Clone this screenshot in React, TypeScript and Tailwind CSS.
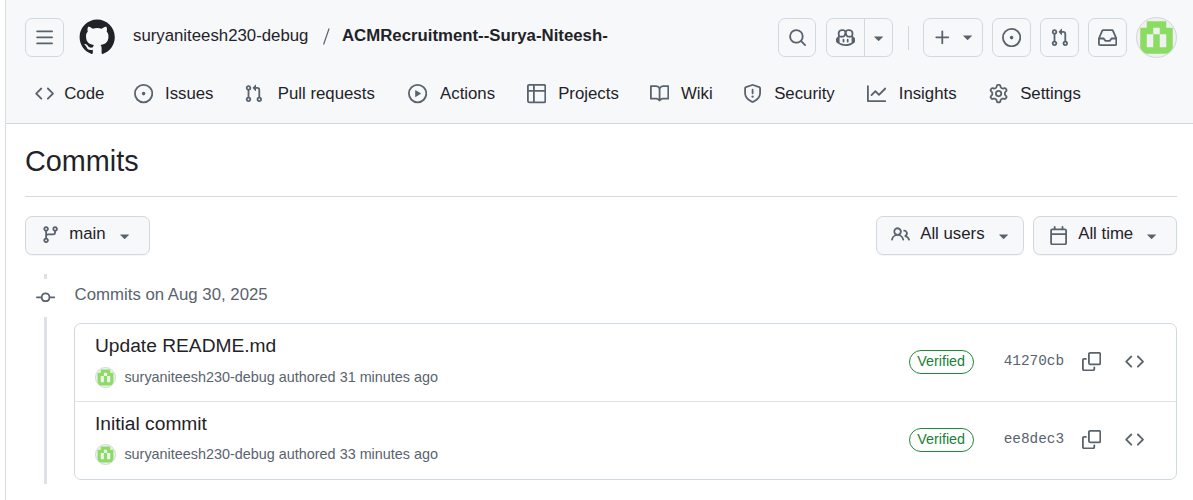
import type { ReactNode } from "react";

const paths = {
  bars: "M1 2.75A.75.75 0 0 1 1.75 2h12.5a.75.75 0 0 1 0 1.5H1.75A.75.75 0 0 1 1 2.75Zm0 5A.75.75 0 0 1 1.75 7h12.5a.75.75 0 0 1 0 1.5H1.75A.75.75 0 0 1 1 7.75ZM1.75 12h12.5a.75.75 0 0 1 0 1.5H1.75a.75.75 0 0 1 0-1.5Z",
  code: "m11.28 3.22 4.25 4.25a.75.75 0 0 1 0 1.06l-4.25 4.25a.749.749 0 0 1-1.275-.326.749.749 0 0 1 .215-.734L13.94 8l-3.72-3.72a.749.749 0 0 1 .326-1.275.749.749 0 0 1 .734.215Zm-6.56 0a.751.751 0 0 1 1.042.018.751.751 0 0 1 .018 1.042L2.06 8l3.72 3.72a.749.749 0 0 1-.326 1.275.749.749 0 0 1-.734-.215L.47 8.53a.75.75 0 0 1 0-1.06Z",
  issue: "M8 9.5a1.5 1.5 0 1 0 0-3 1.5 1.5 0 0 0 0 3ZM8 0a8 8 0 1 1 0 16A8 8 0 0 1 8 0ZM1.5 8a6.5 6.5 0 1 0 13 0 6.5 6.5 0 0 0-13 0Z",
  pull: "M1.5 3.25a2.25 2.25 0 1 1 3 2.122v5.256a2.251 2.251 0 1 1-1.5 0V5.372A2.25 2.25 0 0 1 1.5 3.25Zm5.677-.177L9.573.677A.25.25 0 0 1 10 .854V2.5h1A2.5 2.5 0 0 1 13.5 5v5.628a2.251 2.251 0 1 1-1.5 0V5a1 1 0 0 0-1-1h-1v1.646a.25.25 0 0 1-.427.177L7.177 3.427a.25.25 0 0 1 0-.354ZM3.75 2.5a.75.75 0 1 0 0 1.5.75.75 0 0 0 0-1.5Zm0 9.5a.75.75 0 1 0 0 1.5.75.75 0 0 0 0-1.5Zm8.25.75a.75.75 0 1 0 1.5 0 .75.75 0 0 0-1.5 0Z",
  play: "M8 0a8 8 0 1 1 0 16A8 8 0 0 1 8 0ZM1.5 8a6.5 6.5 0 1 0 13 0 6.5 6.5 0 0 0-13 0Zm4.879-2.773 4.264 2.559a.25.25 0 0 1 0 .428l-4.264 2.559A.25.25 0 0 1 6 10.559V5.442a.25.25 0 0 1 .379-.215Z",
  table: "M0 1.75C0 .784.784 0 1.75 0h12.5C15.216 0 16 .784 16 1.75v12.5A1.75 1.75 0 0 1 14.25 16H1.75A1.75 1.75 0 0 1 0 14.25ZM6.5 6.5v8h7.75a.25.25 0 0 0 .25-.25V6.5Zm8-1.5V1.75a.25.25 0 0 0-.25-.25H6.5V5Zm-13 1.5v7.75c0 .138.112.25.25.25H5v-8ZM5 5V1.5H1.75a.25.25 0 0 0-.25.25V5Z",
  book: "M0 1.75A.75.75 0 0 1 .75 1h4.253c1.227 0 2.317.59 3 1.501A3.743 3.743 0 0 1 11.006 1h4.245a.75.75 0 0 1 .75.75v10.5a.75.75 0 0 1-.75.75h-4.507a2.25 2.25 0 0 0-1.591.659l-.622.621a.75.75 0 0 1-1.06 0l-.622-.621A2.25 2.25 0 0 0 5.258 13H.75a.75.75 0 0 1-.75-.75Zm7.251 10.324.004-5.073-.002-2.253A2.25 2.25 0 0 0 5.003 2.5H1.5v9h3.757a3.75 3.75 0 0 1 1.994.574ZM8.755 4.75l-.004 7.322a3.752 3.752 0 0 1 1.992-.572H14.5v-9h-3.495a2.25 2.25 0 0 0-2.25 2.25Z",
  shield: "M7.467.133a1.748 1.748 0 0 1 1.066 0l5.25 1.68A1.75 1.75 0 0 1 15 3.48V7c0 1.566-.32 3.182-1.303 4.682-.983 1.498-2.585 2.813-5.032 3.855a1.697 1.697 0 0 1-1.33 0c-2.447-1.042-4.049-2.357-5.032-3.855C1.32 10.182 1 8.566 1 7V3.48a1.75 1.75 0 0 1 1.217-1.667Zm.61 1.429a.25.25 0 0 0-.153 0l-5.25 1.68a.25.25 0 0 0-.174.238V7c0 1.358.275 2.666 1.057 3.86.784 1.194 2.121 2.34 4.366 3.297a.196.196 0 0 0 .154 0c2.245-.956 3.582-2.104 4.366-3.298C13.225 9.666 13.5 8.36 13.5 7V3.48a.251.251 0 0 0-.174-.237l-5.25-1.68ZM8.75 4.75v3a.75.75 0 0 1-1.5 0v-3a.75.75 0 0 1 1.5 0ZM9 10.5a1 1 0 1 1-2 0 1 1 0 0 1 2 0Z",
  graph: "M1.5 1.75V13.5h13.75a.75.75 0 0 1 0 1.5H.75a.75.75 0 0 1-.75-.75V1.75a.75.75 0 0 1 1.5 0Zm14.28 2.53-5.25 5.25a.75.75 0 0 1-1.06 0L7 7.06 4.28 9.78a.751.751 0 0 1-1.042-.018.751.751 0 0 1-.018-1.042l3.25-3.25a.75.75 0 0 1 1.06 0L10 7.94l4.72-4.72a.751.751 0 0 1 1.042.018.751.751 0 0 1 .018 1.042Z",
  gear: "M8 0a8.2 8.2 0 0 1 .701.031C9.444.095 9.99.645 10.16 1.29l.288 1.107c.018.066.079.158.212.224.231.114.454.243.668.386.123.082.233.09.299.071l1.103-.303c.644-.176 1.392.021 1.82.63.27.385.506.792.704 1.218.315.675.111 1.422-.364 1.891l-.814.806c-.049.048-.098.147-.088.294.016.257.016.515 0 .772-.01.147.038.246.088.294l.814.806c.475.469.679 1.216.364 1.891a7.977 7.977 0 0 1-.704 1.217c-.428.61-1.176.807-1.82.63l-1.102-.302c-.067-.019-.177-.011-.3.071a5.909 5.909 0 0 1-.668.386c-.133.066-.194.158-.211.224l-.29 1.106c-.168.646-.715 1.196-1.458 1.26a8.006 8.006 0 0 1-1.402 0c-.743-.064-1.289-.614-1.458-1.26l-.289-1.106c-.018-.066-.079-.158-.212-.224a5.738 5.738 0 0 1-.668-.386c-.123-.082-.233-.09-.299-.071l-1.103.303c-.644.176-1.392-.021-1.82-.63a8.12 8.12 0 0 1-.704-1.218c-.315-.675-.111-1.422.363-1.891l.815-.806c.05-.048.098-.147.088-.294a6.214 6.214 0 0 1 0-.772c.01-.147-.038-.246-.088-.294l-.815-.806C.635 6.045.431 5.298.746 4.623a7.92 7.92 0 0 1 .704-1.217c.428-.61 1.176-.807 1.82-.63l1.102.302c.067.019.177.011.3-.071.214-.143.437-.272.668-.386.133-.066.194-.158.211-.224l.29-1.106C6.009.645 6.556.095 7.299.03 7.53.01 7.764 0 8 0Zm-.571 1.525c-.036.003-.108.036-.137.146l-.289 1.105c-.147.561-.549.967-.998 1.189-.173.086-.34.183-.5.29-.417.278-.97.423-1.529.27l-1.103-.303c-.109-.03-.175.016-.195.045-.22.312-.412.644-.573.99-.014.031-.021.11.059.19l.815.806c.411.406.562.957.53 1.456a4.709 4.709 0 0 0 0 .582c.032.499-.119 1.05-.53 1.456l-.815.806c-.081.08-.073.159-.059.19.162.346.353.677.573.989.02.03.085.076.195.046l1.102-.303c.56-.153 1.113-.008 1.53.27.161.107.328.204.501.29.447.222.85.629.997 1.189l.289 1.105c.029.109.101.143.137.146a6.6 6.6 0 0 0 1.142 0c.036-.003.108-.036.137-.146l.289-1.105c.147-.561.549-.967.998-1.189.173-.086.34-.183.5-.29.417-.278.97-.423 1.529-.27l1.103.303c.109.029.175-.016.195-.045.22-.313.411-.644.573-.99.014-.031.021-.11-.059-.19l-.815-.806c-.411-.406-.562-.957-.53-1.456a4.709 4.709 0 0 0 0-.582c-.032-.499.119-1.05.53-1.456l.815-.806c.081-.08.073-.159.059-.19a6.464 6.464 0 0 0-.573-.989c-.02-.03-.085-.076-.195-.046l-1.102.303c-.56.153-1.113.008-1.53-.27a4.44 4.44 0 0 0-.501-.29c-.447-.222-.85-.629-.997-1.189l-.289-1.105c-.029-.11-.101-.143-.137-.146a6.6 6.6 0 0 0-1.142 0ZM11 8a3 3 0 1 1-6 0 3 3 0 0 1 6 0ZM9.5 8a1.5 1.5 0 1 0-3.001.001A1.5 1.5 0 0 0 9.5 8Z",
  search: "M10.68 11.74a6 6 0 0 1-7.922-8.982 6 6 0 0 1 8.982 7.922l3.04 3.04a.749.749 0 0 1-.326 1.275.749.749 0 0 1-.734-.215ZM11.5 7a4.499 4.499 0 1 0-8.997 0A4.499 4.499 0 0 0 11.5 7Z",
  copilot: "M7.998 15.035c-4.562 0-7.873-2.914-7.998-3.749V9.338c.085-.628.677-1.686 1.588-2.065.013-.07.024-.143.036-.218.029-.183.06-.384.126-.612-.201-.508-.254-1.084-.254-1.656 0-.87.128-1.769.693-2.484.579-.733 1.494-1.124 2.724-1.261 1.206-.134 2.262.034 2.944.765.05.053.096.108.139.165.044-.057.094-.112.143-.165.682-.731 1.738-.899 2.944-.765 1.23.137 2.145.528 2.724 1.261.566.715.693 1.614.693 2.484 0 .572-.053 1.148-.254 1.656.066.228.098.429.126.612.012.076.024.148.037.218.924.385 1.522 1.471 1.591 2.095v1.872c0 .766-3.351 3.795-8.002 3.795Zm0-1.485c2.28 0 4.584-1.11 5.002-1.433V7.862l-.023-.116c-.49.21-1.075.291-1.727.291-1.146 0-2.059-.327-2.71-.991A3.222 3.222 0 0 1 8 6.303a3.24 3.24 0 0 1-.544.743c-.65.664-1.563.991-2.71.991-.652 0-1.236-.081-1.727-.291l-.023.116v4.255c.419.323 2.722 1.433 5.002 1.433ZM6.762 2.83c-.193-.206-.637-.413-1.682-.297-1.019.113-1.479.404-1.713.7-.247.312-.369.789-.369 1.554 0 .793.129 1.171.308 1.371.162.181.519.379 1.442.379.853 0 1.339-.235 1.638-.54.315-.322.527-.827.617-1.553.117-.935-.037-1.395-.241-1.614Zm4.155-.297c-1.044-.116-1.488.091-1.681.297-.204.219-.359.679-.242 1.614.091.726.303 1.231.618 1.553.299.305.784.54 1.638.54.922 0 1.28-.198 1.442-.379.179-.2.308-.578.308-1.371 0-.765-.123-1.242-.37-1.554-.233-.296-.693-.587-1.713-.7ZM6.25 9.037a.75.75 0 0 1 .75.75v1.501a.75.75 0 0 1-1.5 0V9.787a.75.75 0 0 1 .75-.75Zm4.25.75v1.501a.75.75 0 0 1-1.5 0V9.787a.75.75 0 0 1 1.5 0Z",
  caret: "m4.427 7.427 3.396 3.396a.25.25 0 0 0 .354 0l3.396-3.396A.25.25 0 0 0 11.396 7H4.604a.25.25 0 0 0-.177.427Z",
  plus: "M7.75 2a.75.75 0 0 1 .75.75V7h4.25a.75.75 0 0 1 0 1.5H8.5v4.25a.75.75 0 0 1-1.5 0V8.5H2.75a.75.75 0 0 1 0-1.5H7V2.75A.75.75 0 0 1 7.75 2Z",
  inbox: "M2.8 2.06A1.75 1.75 0 0 1 4.41 1h7.18c.7 0 1.333.417 1.61 1.06l2.74 6.395c.04.093.06.194.06.295v4.5A1.75 1.75 0 0 1 14.25 15H1.75A1.75 1.75 0 0 1 0 13.25v-4.5c0-.101.02-.202.06-.295Zm1.61.44a.25.25 0 0 0-.23.152L1.887 8H4.75a.75.75 0 0 1 .6.3L6.625 10h2.75l1.275-1.7a.75.75 0 0 1 .6-.3h2.863L11.82 2.652a.25.25 0 0 0-.23-.152Zm10.09 7h-2.875l-1.275 1.7a.75.75 0 0 1-.6.3h-3.5a.75.75 0 0 1-.6-.3L4.375 9.5H1.5v3.75c0 .138.112.25.25.25h12.5a.25.25 0 0 0 .25-.25Z",
  branch: "M9.5 3.25a2.25 2.25 0 1 1 3 2.122V6A2.5 2.5 0 0 1 10 8.5H6a1 1 0 0 0-1 1v1.128a2.251 2.251 0 1 1-1.5 0V5.372a2.25 2.25 0 1 1 1.5 0v1.836A2.493 2.493 0 0 1 6 7h4a1 1 0 0 0 1-1v-.628A2.25 2.25 0 0 1 9.5 3.25Zm-6 0a.75.75 0 1 0 1.5 0 .75.75 0 0 0-1.5 0Zm8.25-.75a.75.75 0 1 0 0 1.5.75.75 0 0 0 0-1.5ZM4.25 12a.75.75 0 1 0 0 1.5.75.75 0 0 0 0-1.5Z",
  people: "M2 5.5a3.5 3.5 0 1 1 5.898 2.549 5.508 5.508 0 0 1 3.034 4.084.75.75 0 1 1-1.482.235 4 4 0 0 0-7.9 0 .75.75 0 0 1-1.482-.236A5.507 5.507 0 0 1 3.102 8.05 3.493 3.493 0 0 1 2 5.5ZM11 4a3.001 3.001 0 0 1 2.22 5.018 5.01 5.01 0 0 1 2.56 3.012.749.749 0 0 1-.885.954.752.752 0 0 1-.549-.514 3.507 3.507 0 0 0-2.522-2.372.75.75 0 0 1-.574-.73v-.352a.75.75 0 0 1 .416-.672A1.5 1.5 0 0 0 11 5.5.75.75 0 0 1 11 4Zm-5.5-.5a2 2 0 1 0-.001 3.999A2 2 0 0 0 5.5 3.5Z",
  calendar: "M4.75 0a.75.75 0 0 1 .75.75V2h5V.75a.75.75 0 0 1 1.5 0V2h1.25c.966 0 1.75.784 1.75 1.75v10.5A1.75 1.75 0 0 1 13.25 16H2.75A1.75 1.75 0 0 1 1 14.25V3.75C1 2.784 1.784 2 2.75 2H4V.75A.75.75 0 0 1 4.75 0ZM2.5 7.5v6.75c0 .138.112.25.25.25h10.5a.25.25 0 0 0 .25-.25V7.5Zm10.75-4H2.75a.25.25 0 0 0-.25.25V6h11V3.75a.25.25 0 0 0-.25-.25Z",
  commit: "M11.93 8.5a4.002 4.002 0 0 1-7.86 0H.75a.75.75 0 0 1 0-1.5h3.32a4.002 4.002 0 0 1 7.86 0h3.32a.75.75 0 0 1 0 1.5Zm-1.43-.75a2.5 2.5 0 1 0-5 0 2.5 2.5 0 0 0 5 0Z",
  copy: "M0 6.75C0 5.784.784 5 1.75 5h1.5a.75.75 0 0 1 0 1.5h-1.5a.25.25 0 0 0-.25.25v7.5c0 .138.112.25.25.25h7.5a.25.25 0 0 0 .25-.25v-1.5a.75.75 0 0 1 1.5 0v1.5A1.75 1.75 0 0 1 9.25 16h-7.5A1.75 1.75 0 0 1 0 14.25ZM5 1.75C5 .784 5.784 0 6.75 0h7.5C15.216 0 16 .784 16 1.75v7.5A1.75 1.75 0 0 1 14.25 11h-7.5A1.75 1.75 0 0 1 5 9.25Zm1.75-.25a.25.25 0 0 0-.25.25v7.5c0 .138.112.25.25.25h7.5a.25.25 0 0 0 .25-.25v-7.5a.25.25 0 0 0-.25-.25Z",
  github: "M12 1C5.923 1 1 5.923 1 12c0 4.867 3.149 8.979 7.521 10.436.55.096.756-.233.756-.522 0-.262-.013-1.128-.013-2.049-2.764.509-3.479-.674-3.699-1.292-.124-.317-.66-1.293-1.127-1.554-.385-.207-.936-.715-.014-.729.866-.014 1.485.797 1.691 1.128.99 1.663 2.571 1.196 3.204.907.096-.715.385-1.196.701-1.471-2.448-.275-5.005-1.224-5.005-5.432 0-1.196.426-2.186 1.128-2.956-.111-.275-.496-1.402.11-2.915 0 0 .921-.288 3.024 1.128a10.193 10.193 0 0 1 2.75-.371c.936 0 1.871.123 2.75.371 2.104-1.43 3.025-1.128 3.025-1.128.605 1.513.221 2.64.111 2.915.701.77 1.127 1.747 1.127 2.956 0 4.222-2.571 5.157-5.019 5.432.399.344.743 1.004.743 2.035 0 1.471-.014 2.654-.014 3.025 0 .289.206.632.756.522C19.851 20.979 23 16.854 23 12c0-6.077-4.922-11-11-11Z",
};

type IconName = keyof typeof paths;

function Icon({ name, className = "" }: { name: IconName; className?: string }) {
  return (
    <svg viewBox="0 0 16 16" fill="currentColor" className={`size-[19.2px] shrink-0 text-[#59636e] ${className}`}>
      <path d={paths[name]} />
    </svg>
  );
}

function Avatar({ className }: { className: string }) {
  return (
    <span className={`flex shrink-0 items-center justify-center overflow-hidden rounded-full border border-[#d4d6d9] bg-[#f0f0f0] ${className}`}>
      <svg viewBox="0 0 6 6" className="size-full">
        <path
          fill="#8bdc63"
          fillRule="evenodd"
          d="M1.5.5h3v1h1v4h-5v-4h1zM2.5 1.5v1h1v-1zM1.5 2.5v2h1v-2zM3.5 2.5v2h1v-2z"
        />
      </svg>
    </span>
  );
}

function IconButton({ children, className }: { children: ReactNode; className: string }) {
  return (
    <button className={`flex h-[39px] items-center justify-center rounded-[7px] border border-[#d1d9e0] ${className}`}>
      {children}
    </button>
  );
}

const tabs: { label: string; icon: IconName; width: string; gap: string }[] = [
  { label: "Code", icon: "code", width: "w-[98.8px]", gap: "gap-[10px]" },
  { label: "Issues", icon: "issue", width: "w-[110.2px]", gap: "gap-[12px]" },
  { label: "Pull requests", icon: "pull", width: "w-[163.9px]", gap: "gap-[14.6px]" },
  { label: "Actions", icon: "play", width: "w-[119.1px]", gap: "gap-[13px]" },
  { label: "Projects", icon: "table", width: "w-[122.8px]", gap: "gap-[12px]" },
  { label: "Wiki", icon: "book", width: "w-[93.2px]", gap: "gap-[12px]" },
  { label: "Security", icon: "shield", width: "w-[124px]", gap: "gap-[12px]" },
  { label: "Insights", icon: "graph", width: "w-[122px]", gap: "gap-[12.6px]" },
  { label: "Settings", icon: "gear", width: "w-[120px]", gap: "gap-[12px]" },
];

const commits = [
  { title: "Update README.md", age: "31 minutes ago", sha: "41270cb", metaGap: "mt-[9px]" },
  { title: "Initial commit", age: "33 minutes ago", sha: "ee8dec3", metaGap: "mt-[8px]" },
];

export default function App() {
  return (
    <div className="flex h-[500px] w-[1193px] overflow-hidden bg-white pl-[5px] font-['Liberation_Sans',Arial,sans-serif] text-[16.8px] leading-[24px] text-[#1f2328]">
      <div className="flex min-w-0 flex-1 flex-col border-l border-[#d9dce0]">
        <header className="flex h-[124px] flex-col border-b border-[#d1d9e0] bg-[#f6f8fa]">
          <div className="flex h-[75px] items-center pl-[19px]">
            <IconButton className="w-[39px]">
              <Icon name="bars" />
            </IconButton>
            <svg viewBox="0 0 24 24" fill="currentColor" className="ml-[14px] size-[38.4px]">
              <path d={paths.github} />
            </svg>
            <span className="ml-[16.6px] w-[190px] pb-[4px]">suryaniteesh230-debug</span>
            <span className="w-[19px] text-[#59636e]">
              <svg viewBox="0 0 7 18" className="mb-px h-[18px] w-[7px]" fill="none" stroke="currentColor" strokeWidth="1.2">
                <path d="M6.1.5.6 16.5" />
              </svg>
            </span>
            <span className="pb-[4px] font-bold">ACMRecruitment--Surya-Niteesh-</span>
            <div className="ml-auto flex items-center pr-[16px]">
              <IconButton className="w-[38px] pl-[1px]">
                <Icon name="search" />
              </IconButton>
              <div className="ml-[10px] flex h-[39px] w-[67px] rounded-[7px] border border-[#d1d9e0]">
                <span className="flex w-[38px] items-center justify-center border-r border-[#d1d9e0]">
                  <Icon name="copilot" />
                </span>
                <span className="flex flex-1 items-center justify-center">
                  <Icon name="caret" />
                </span>
              </div>
              <span className="ml-[15px] h-[24px] w-px bg-[#d1d9e0]" />
              <IconButton className="ml-[14px] w-[60px] gap-[5px] pl-[4px]">
                <Icon name="plus" className="mt-[1px]" />
                <Icon name="caret" className="mb-[1px]" />
              </IconButton>
              <IconButton className="ml-[9px] w-[39px]">
                <Icon name="issue" />
              </IconButton>
              <IconButton className="ml-[9px] w-[39px]">
                <Icon name="pull" />
              </IconButton>
              <IconButton className="ml-[9px] w-[39px]">
                <Icon name="inbox" />
              </IconButton>
              <Avatar className="ml-[9px] size-[41px]" />
            </div>
          </div>
          <nav className="flex h-[38px] items-center pl-[29px]">
            {tabs.map((tab) => (
              <a key={tab.label} className={`flex shrink-0 items-center whitespace-nowrap ${tab.width} ${tab.gap}`}>
                <Icon name={tab.icon} />
                <span className="pb-[1px]">{tab.label}</span>
              </a>
            ))}
          </nav>
        </header>

        <main className="flex flex-col pr-[16px] pl-[19px]">
          <h1 className="flex h-[73px] items-center border-b border-[#d1d9e0] pt-[2px] text-[28.8px]">Commits</h1>
          <div className="mt-[19px] flex h-[39px] gap-[9px]">
            <button className="mr-auto flex w-[125px] items-center rounded-[7px] border border-[#d1d9e0] bg-[#f6f8fa] pl-[15px] shadow-[0_1px_1px_rgba(31,35,40,0.04)]">
              <Icon name="branch" className="mb-[2px]" />
              <span className="ml-[9px] pb-[3px]">main</span>
              <Icon name="caret" className="ml-[9px]" />
            </button>
            <button className="flex w-[148px] items-center rounded-[7px] border border-[#d1d9e0] bg-[#f6f8fa] pl-[14px] shadow-[0_1px_1px_rgba(31,35,40,0.04)]">
              <Icon name="people" className="mb-[2px]" />
              <span className="ml-[10px] pb-[3px]">All users</span>
              <Icon name="caret" className="ml-[9px]" />
            </button>
            <button className="flex w-[144px] items-center rounded-[7px] border border-[#d1d9e0] bg-[#f6f8fa] pl-[15px] shadow-[0_1px_1px_rgba(31,35,40,0.04)]">
              <Icon name="calendar" />
              <span className="ml-[10px] pb-[3px]">All time</span>
              <Icon name="caret" className="ml-[9px]" />
            </button>
          </div>

          <div className="mt-[19px] flex">
            <div className="flex w-[49px] flex-col pl-[11px]">
              <span className="ml-[8px] h-[5px] w-[3px] bg-[#dce2e7]" />
              <Icon name="commit" className="mt-[9px]" />
              <span className="mt-[9.8px] ml-[8px] h-[167px] w-[3px] bg-[#dce2e7]" />
            </div>
            <section className="min-w-0 flex-1">
              <h2 className="h-[49px] pt-[9px] pl-[0.6px] text-[#59636e]">Commits on Aug 30, 2025</h2>
              <ul className="flex h-[157px] flex-col divide-y divide-[#dfe3e7] rounded-[7px] border border-[#d1d9e0]">
                {commits.map((commit) => (
                  <li key={commit.sha} className="flex flex-1 items-start pr-[32px] pl-[20px]">
                    <div className="flex flex-1 flex-col pt-[10px]">
                      <h3 className="text-[19.2px]">{commit.title}</h3>
                      <div className={`flex h-[21px] items-center text-[14.4px] text-[#59636e] ${commit.metaGap}`}>
                        <Avatar className="size-[21px]" />
                        <span className="ml-[8.4px] pb-[1px]">suryaniteesh230-debug authored {commit.age}</span>
                      </div>
                    </div>
                    <span className="mt-[26px] flex h-[24px] w-[65px] justify-center rounded-full border border-[#1f883d] text-[14.4px] leading-[21px] text-[#1a7f37]">
                      Verified
                    </span>
                    <span className="mt-[25px] ml-[30px] w-[78px] font-['Liberation_Mono',monospace] text-[14.4px] text-[#59636e]">
                      {commit.sha}
                    </span>
                    <Icon name="copy" className="mt-[28px]" />
                    <Icon name="code" className="mt-[28px] ml-[24px]" />
                  </li>
                ))}
              </ul>
            </section>
          </div>
        </main>
      </div>
    </div>
  );
}
